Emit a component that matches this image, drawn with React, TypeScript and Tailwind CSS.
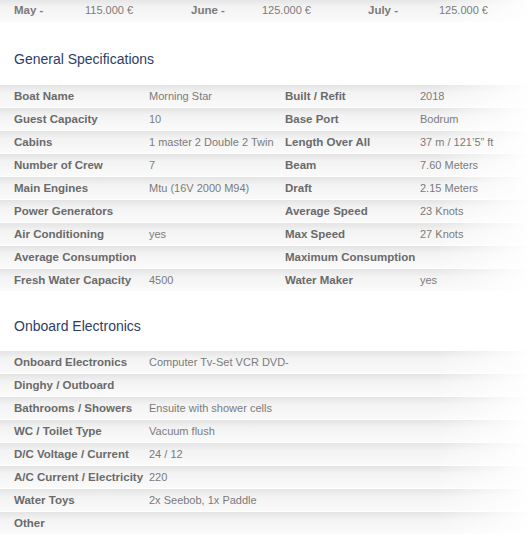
const rowBg =
  "bg-[linear-gradient(to_right,rgba(255,255,255,0)_82%,#ffffff_100%),linear-gradient(to_bottom,#e4e4e4_0%,#f3f3f3_35%,#fafafa_100%)]";

const prices = [
  ["May -", "115.000 €"],
  ["June -", "125.000 €"],
  ["July -", "125.000 €"],
];

const general: [string, string, string, string][] = [
  ["Boat Name", "Morning Star", "Built / Refit", "2018"],
  ["Guest Capacity", "10", "Base Port", "Bodrum"],
  ["Cabins", "1 master 2 Double 2 Twin", "Length Over All", "37 m / 121’5” ft"],
  ["Number of Crew", "7", "Beam", "7.60 Meters"],
  ["Main Engines", "Mtu (16V 2000 M94)", "Draft", "2.15 Meters"],
  ["Power Generators", "", "Average Speed", "23 Knots"],
  ["Air Conditioning", "yes", "Max Speed", "27 Knots"],
  ["Average Consumption", "", "Maximum Consumption", ""],
  ["Fresh Water Capacity", "4500", "Water Maker", "yes"],
];

const electronics: [string, string][] = [
  ["Onboard Electronics", "Computer Tv-Set VCR DVD-"],
  ["Dinghy / Outboard", ""],
  ["Bathrooms / Showers", "Ensuite with shower cells"],
  ["WC / Toilet Type", "Vacuum flush"],
  ["D/C Voltage / Current", "24 / 12"],
  ["A/C Current / Electricity", "220"],
  ["Water Toys", "2x Seebob, 1x Paddle"],
  ["Other", ""],
];

function Label({ children }: { children: React.ReactNode }) {
  return <span className="font-bold text-[11.5px] text-[#6a6a6a] whitespace-nowrap">{children}</span>;
}

function Value({ children }: { children: React.ReactNode }) {
  return <span className="text-[11px] text-[#7b7b7b] whitespace-nowrap">{children}</span>;
}

export default function App() {
  return (
    <div className="w-[531px] h-[547px] overflow-hidden bg-white font-['Liberation_Sans',Arial,sans-serif] text-[12px]">
      {/* Prices */}
      <div className={`${rowBg} h-[23px] -mt-[1px] pl-[14px] flex items-center`}>
        {prices.map(([m, p]) => (
          <div key={m} className="w-[177px] shrink-0 flex">
            <span className="w-[71px] shrink-0 font-bold text-[11.5px] text-[#7a7a7a]">{m}</span>
            <Value>{p}</Value>
          </div>
        ))}
      </div>

      <h2 className="pl-[14px] mt-[28px] text-[14px] leading-[18px] text-[#2e3d66]">
        General Specifications
      </h2>

      <div className="mt-[16px]">
        {general.map(([a, b, c, d]) => (
          <div key={a} className={`${rowBg} h-[23px] border-t border-white pl-[14px] flex items-center`}>
            <div className="w-[135px] shrink-0"><Label>{a}</Label></div>
            <div className="w-[136px] shrink-0"><Value>{b}</Value></div>
            <div className="w-[135px] shrink-0"><Label>{c}</Label></div>
            <div><Value>{d}</Value></div>
          </div>
        ))}
      </div>

      <h2 className="pl-[14px] mt-[26px] text-[14px] leading-[18px] text-[#2e3d66]">
        Onboard Electronics
      </h2>

      <div className="mt-[15px]">
        {electronics.map(([a, b]) => (
          <div key={a} className={`${rowBg} h-[23px] border-t border-white pl-[14px] flex items-center`}>
            <div className="w-[135px] shrink-0"><Label>{a}</Label></div>
            <div><Value>{b}</Value></div>
          </div>
        ))}
      </div>
    </div>
  );
}
